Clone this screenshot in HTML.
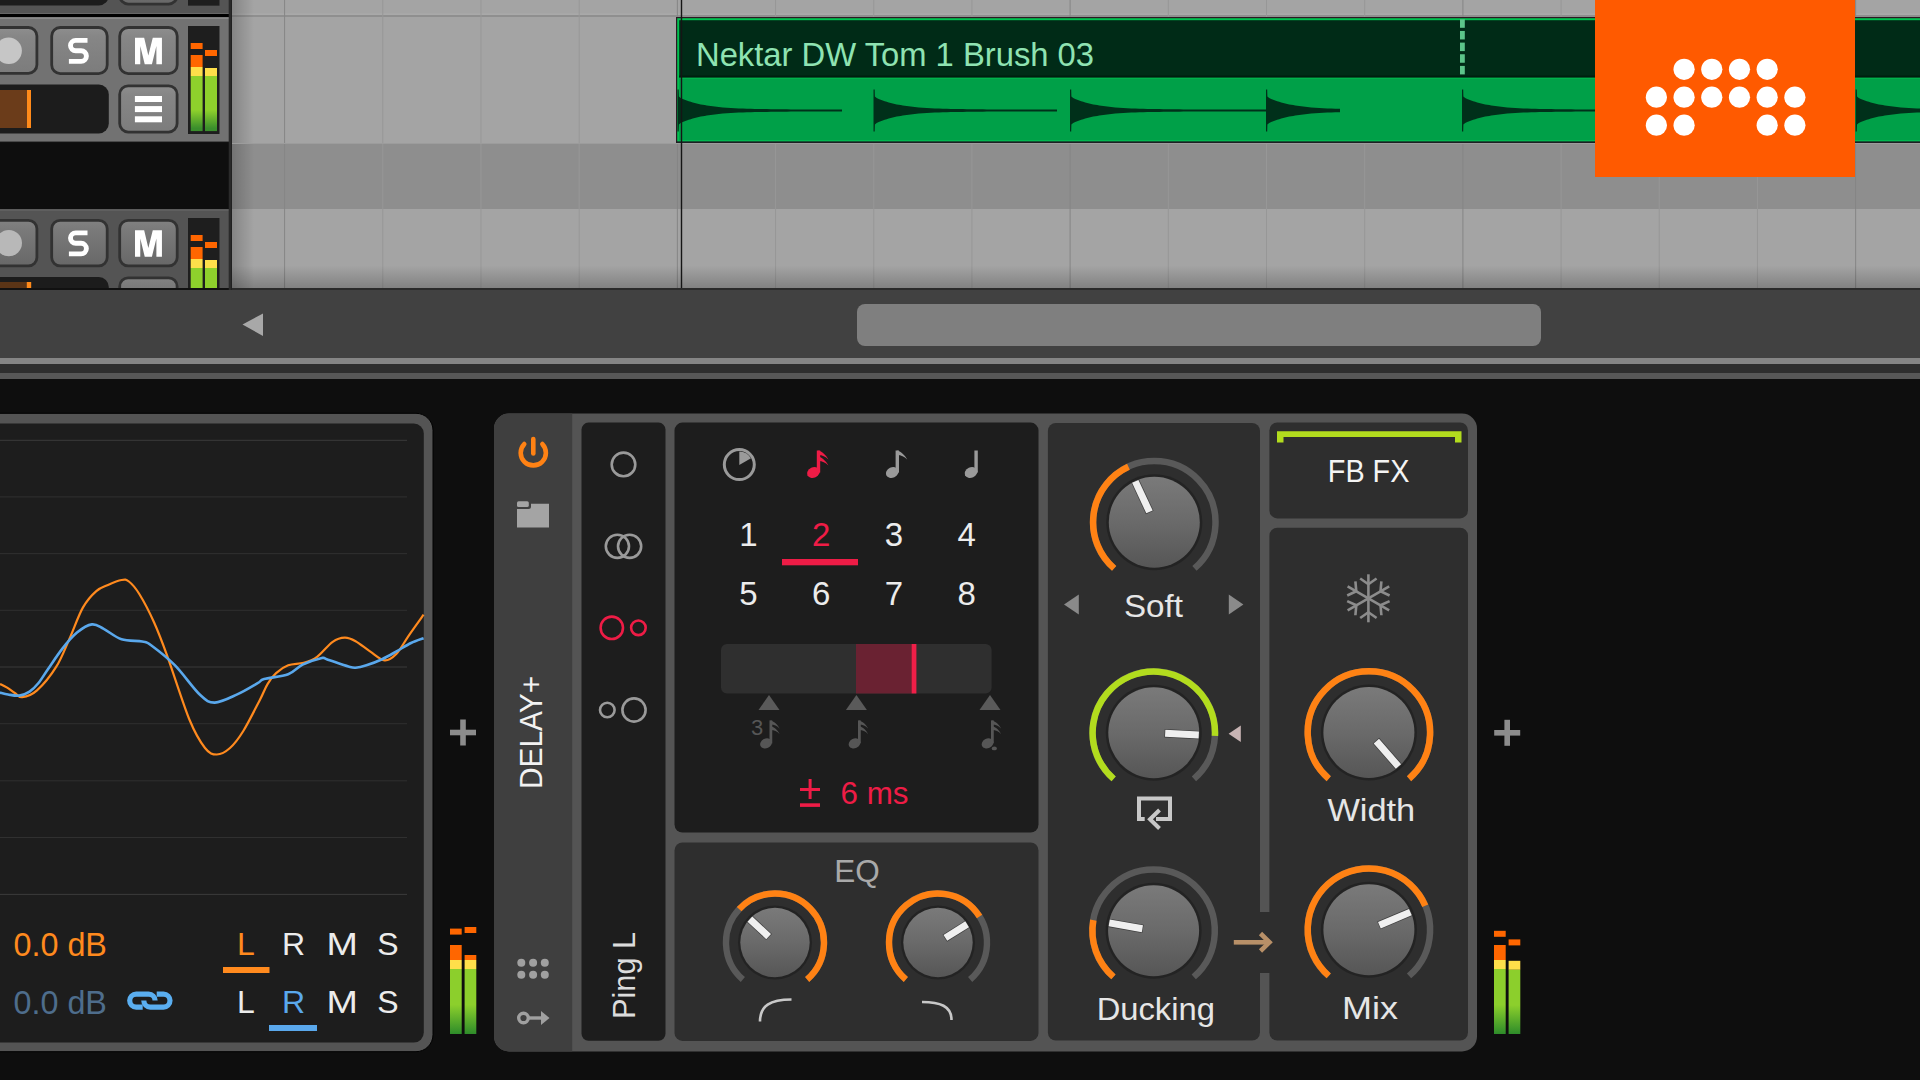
<!DOCTYPE html>
<html><head><meta charset="utf-8">
<style>
html,body{margin:0;padding:0}
body{width:1920px;height:1080px;overflow:hidden;position:relative;background:#0e0e0e;font-family:"Liberation Sans",sans-serif}
.a{position:absolute}
.btn{position:absolute;width:55px;height:43px;border:2px solid #3b3b3b;border-radius:11px;background:linear-gradient(#8d8d8d,#6f6f6f);box-sizing:content-box}
.btxt{position:absolute;left:0;right:0;text-align:center;color:#fff;font-weight:bold;font-size:35px;line-height:43px;top:0}
.trk{position:absolute;left:0;width:229px;background:#5c5c5c;overflow:hidden}
.sl{position:absolute;left:-12px;width:120px;height:49px;background:#1c1c1c;border-radius:11px}
.mtr{position:absolute;left:188px;width:32px;height:108px;background:#1c1c1c}
</style></head><body>

<svg class="a" style="left:0;top:0" width="232" height="290" viewBox="0 0 232 290">
<defs>
<linearGradient id="hmg" x1="0" x2="0" y1="0" y2="1"><stop offset="0" stop-color="#8ed02c"/><stop offset="0.62" stop-color="#8ed02c"/><stop offset="0.95" stop-color="#3a8e2c"/><stop offset="1" stop-color="#3a8e2c"/></linearGradient>
<linearGradient id="b1" x1="0" x2="0" y1="0" y2="1"><stop offset="0" stop-color="#8e8e8e"/><stop offset="0.2" stop-color="#868686"/><stop offset="1" stop-color="#7c7c7c"/></linearGradient>
<linearGradient id="b2" x1="0" x2="0" y1="0" y2="1"><stop offset="0" stop-color="#828282"/><stop offset="0.2" stop-color="#7a7a7a"/><stop offset="1" stop-color="#686868"/></linearGradient>
<clipPath id="c0"><rect x="0" y="0" width="229" height="14"/></clipPath>
<clipPath id="c2"><rect x="0" y="209" width="229" height="79"/></clipPath>
</defs>
<rect x="0" y="0" width="232" height="290" fill="#0e0e0e"/>
<g clip-path="url(#c0)"><rect x="0" y="0" width="229" height="14" fill="#545454"/><rect x="-20" y="-44" width="128.8" height="49.5" rx="10" fill="#1c1c1c"/><rect x="119.70" y="-42.60" width="57.40" height="46.70" rx="8.5" fill="url(#b2)" stroke="#323232" stroke-width="2.8"/><rect x="188" y="-50" width="31.5" height="55.65" fill="#1e1e1e"/><rect x="0" y="13" width="229" height="1" fill="#666"/></g>
<rect x="0" y="14" width="229" height="3" fill="#000"/>
<rect x="0" y="17" width="229" height="125" fill="#727272"/><rect x="0" y="17.5" width="229" height="1.5" fill="#888"/>
<rect x="-18.60" y="27.50" width="55.50" height="45.80" rx="8.5" fill="url(#b1)" stroke="#323232" stroke-width="2.8"/><circle cx="8.7" cy="50.8" r="13.2" fill="#c6c6c6"/><rect x="51.70" y="27.50" width="55.50" height="46.10" rx="8.5" fill="url(#b1)" stroke="#323232" stroke-width="2.8"/><path d="M87.5 40.4 H75.7 A5.2 5.2 0 0 0 75.7 50.8 H81.1 A5.3 5.3 0 0 1 81.1 61.4 H68.9" fill="none" stroke="#fff" stroke-width="4.9"/><rect x="119.70" y="27.50" width="57.50" height="46.10" rx="8.5" fill="url(#b1)" stroke="#323232" stroke-width="2.8"/><path d="M135.00 64.17 L135.00 37.78 L144.17 37.78 L148.33 55.56 L152.78 37.78 L161.94 37.78 L161.94 64.17 L156.39 64.17 L156.39 46.11 L151.94 64.17 L144.72 64.17 L140.28 46.11 L140.28 64.17 Z" fill="#fff"/>
<rect x="-20" y="84.6" width="128.8" height="48.9" rx="10" fill="#1c1c1c"/><rect x="0" y="90" width="27" height="38" fill="#6b3c1a"/><rect x="27" y="90" width="4" height="38" fill="#ff8a1a"/><rect x="119.70" y="85.80" width="57.40" height="46.30" rx="8.5" fill="url(#b1)" stroke="#323232" stroke-width="2.8"/><rect x="134.9" y="96" width="27.1" height="6" fill="#fff"/><rect x="134.9" y="106.1" width="27.1" height="6" fill="#fff"/><rect x="134.9" y="116.3" width="27.1" height="6" fill="#fff"/><rect x="188" y="26" width="31.5" height="108" fill="#1e1e1e"/><rect x="190.7" y="43" width="11.9" height="6" fill="#ff6600"/><rect x="190.7" y="55" width="11.9" height="12" fill="#ff6600"/><rect x="190.7" y="67" width="11.9" height="9" fill="#fedf4a"/><rect x="190.7" y="76" width="11.9" height="55.1" fill="url(#hmg)"/><rect x="205" y="50" width="12" height="6" fill="#ff6600"/><rect x="205" y="68" width="12" height="8" fill="#fedf4a"/><rect x="205" y="76" width="12" height="55.1" fill="url(#hmg)"/>
<rect x="0" y="141.6" width="229" height="1.4" fill="#111"/>
<g clip-path="url(#c2)"><rect x="0" y="209" width="229" height="79" fill="#545454"/><rect x="0" y="209.2" width="229" height="1.8" fill="#5f5f5f"/><rect x="-18.60" y="220.30" width="55.50" height="45.60" rx="8.5" fill="url(#b2)" stroke="#323232" stroke-width="2.8"/><circle cx="8.8" cy="243.1" r="13.2" fill="#b8b8b8"/><rect x="51.70" y="220.30" width="55.50" height="45.60" rx="8.5" fill="url(#b2)" stroke="#323232" stroke-width="2.8"/><path d="M87.5 232.9 H75.7 A5.2 5.2 0 0 0 75.7 243.3 H81.1 A5.3 5.3 0 0 1 81.1 253.9 H68.9" fill="none" stroke="#fff" stroke-width="4.9"/><rect x="119.70" y="220.30" width="57.50" height="45.60" rx="8.5" fill="url(#b2)" stroke="#323232" stroke-width="2.8"/><path d="M135.00 256.67 L135.00 230.28 L144.17 230.28 L148.33 248.06 L152.78 230.28 L161.94 230.28 L161.94 256.67 L156.39 256.67 L156.39 238.61 L151.94 256.67 L144.72 256.67 L140.28 238.61 L140.28 256.67 Z" fill="#fff"/><rect x="-20" y="277" width="128.8" height="48.9" rx="10" fill="#1c1c1c"/><rect x="0" y="282" width="27" height="10" fill="#5a3416"/><rect x="26.8" y="282" width="4.4" height="10" fill="#ff8a1a"/><rect x="119.70" y="277.80" width="57.40" height="45.80" rx="8.5" fill="url(#b2)" stroke="#323232" stroke-width="2.8"/><rect x="188" y="218" width="31.5" height="108" fill="#1e1e1e"/><rect x="190.7" y="235" width="11.9" height="6" fill="#ff6600"/><rect x="190.7" y="247" width="11.9" height="12" fill="#ff6600"/><rect x="190.7" y="259" width="11.9" height="9" fill="#fedf4a"/><rect x="190.7" y="268" width="11.9" height="55.1" fill="url(#hmg)"/><rect x="205" y="242" width="12" height="6" fill="#ff6600"/><rect x="205" y="260" width="12" height="8" fill="#fedf4a"/><rect x="205" y="268" width="12" height="55.1" fill="url(#hmg)"/></g>
<rect x="0" y="288" width="229" height="2.6" fill="#111"/>
<rect x="228.7" y="0" width="3" height="290" fill="#2a2a2a"/>
</svg>
<!-- ===== ARRANGER ===== -->
<svg class="a" style="left:0;top:0" width="1920" height="288" viewBox="0 0 1920 288">
<rect x="232" y="0" width="1688" height="288" fill="#a4a4a4"/>
<rect x="232" y="143" width="1688" height="66" fill="#8e8e8e"/>
<rect x="232" y="13.6" width="1688" height="1" fill="#acacac"/>
<rect x="232" y="15.2" width="1688" height="1.6" fill="#8b8b8b"/>
<rect x="284.10" y="0" width="1" height="288" fill="#858585"/>
<rect x="382.29" y="0" width="1" height="288" fill="#979797"/>
<rect x="480.48" y="0" width="1" height="288" fill="#979797"/>
<rect x="578.67" y="0" width="1" height="288" fill="#979797"/>
<rect x="676.86" y="0" width="1" height="288" fill="#858585"/>
<rect x="775.05" y="0" width="1" height="288" fill="#979797"/>
<rect x="873.24" y="0" width="1" height="288" fill="#979797"/>
<rect x="971.43" y="0" width="1" height="288" fill="#979797"/>
<rect x="1069.62" y="0" width="1" height="288" fill="#858585"/>
<rect x="1167.81" y="0" width="1" height="288" fill="#979797"/>
<rect x="1266.00" y="0" width="1" height="288" fill="#979797"/>
<rect x="1364.19" y="0" width="1" height="288" fill="#979797"/>
<rect x="1462.38" y="0" width="1" height="288" fill="#858585"/>
<rect x="1560.57" y="0" width="1" height="288" fill="#979797"/>
<rect x="1658.76" y="0" width="1" height="288" fill="#979797"/>
<rect x="1756.95" y="0" width="1" height="288" fill="#979797"/>
<rect x="1855.14" y="0" width="1" height="288" fill="#858585"/>
<defs><linearGradient id="shl" x1="0" x2="1" y1="0" y2="0"><stop offset="0" stop-color="#000" stop-opacity="0.19"/><stop offset="1" stop-color="#000" stop-opacity="0"/></linearGradient><linearGradient id="shb" x1="0" x2="0" y1="0" y2="1"><stop offset="0" stop-color="#000" stop-opacity="0"/><stop offset="1" stop-color="#000" stop-opacity="0.21"/></linearGradient></defs>
<rect x="232" y="0" width="22" height="288" fill="url(#shl)"/>
<rect x="232" y="265.5" width="1688" height="22.5" fill="url(#shb)"/>
<rect x="676" y="17" width="1244" height="126" fill="#2a1a22"/>
<rect x="677.2" y="18.2" width="1243" height="124" fill="#00c050"/>
<rect x="679.2" y="20.2" width="1241" height="58" fill="#002b17"/>
<rect x="679.2" y="78" width="1241" height="63.6" fill="#00a048"/>
<rect x="679.2" y="75.6" width="1241" height="2" fill="#001d0f"/><rect x="679.2" y="77.6" width="1241" height="1.4" fill="#00b24c"/>
<rect x="679.2" y="140" width="1241" height="1.4" fill="#00b850"/><rect x="676" y="141.4" width="1244" height="1.4" fill="#1c1a22"/><rect x="232" y="143" width="1688" height="1" fill="#9c9c9c"/>
<path d="M677.5 89.5 L678.7 89.5 L678.9 96.5 L680.7 98.1 L682.7 98.9 L684.7 99.8 L686.7 100.5 L688.7 101.2 L690.7 101.8 L692.7 102.4 L694.7 103.0 L696.7 103.5 L698.7 103.9 L700.7 104.4 L702.7 104.8 L704.7 105.1 L706.7 105.5 L708.7 105.8 L710.7 106.1 L712.7 106.3 L714.7 106.6 L716.7 106.8 L718.7 107.0 L722.7 107.4 L726.7 107.7 L730.7 108.0 L734.7 108.2 L738.7 108.4 L742.7 108.5 L746.7 108.7 L750.7 108.8 L754.7 108.9 L758.7 109.0 L762.7 109.1 L766.7 109.1 L770.7 109.2 L774.7 109.2 L778.7 109.3 L782.7 109.3 L786.7 109.3 L790.7 109.4 L794.7 109.4 L798.7 109.4 L802.7 109.4 L806.7 109.4 L810.7 109.4 L814.7 109.4 L818.7 109.5 L822.7 109.5 L826.7 109.5 L830.7 109.5 L834.7 109.5 L838.7 109.5 L842.0 109.5 L842.0 111.5 L838.7 111.5 L834.7 111.5 L830.7 111.5 L826.7 111.5 L822.7 111.5 L818.7 111.5 L814.7 111.6 L810.7 111.6 L806.7 111.6 L802.7 111.6 L798.7 111.6 L794.7 111.6 L790.7 111.6 L786.7 111.7 L782.7 111.7 L778.7 111.7 L774.7 111.8 L770.7 111.8 L766.7 111.9 L762.7 111.9 L758.7 112.0 L754.7 112.1 L750.7 112.2 L746.7 112.3 L742.7 112.5 L738.7 112.6 L734.7 112.8 L730.7 113.0 L726.7 113.3 L722.7 113.6 L718.7 114.0 L716.7 114.2 L714.7 114.4 L712.7 114.7 L710.7 114.9 L708.7 115.2 L706.7 115.5 L704.7 115.9 L702.7 116.2 L700.7 116.6 L698.7 117.1 L696.7 117.5 L694.7 118.0 L692.7 118.6 L690.7 119.2 L688.7 119.8 L686.7 120.5 L684.7 121.2 L682.7 122.1 L680.7 122.9 L678.9 124.5 L678.7 131.5 L677.5 131.5 Z M873.5 89.5 L874.7 89.5 L874.9 96.5 L876.7 98.1 L878.7 98.9 L880.7 99.8 L882.7 100.5 L884.7 101.2 L886.7 101.8 L888.7 102.4 L890.7 103.0 L892.7 103.5 L894.7 103.9 L896.7 104.4 L898.7 104.8 L900.7 105.1 L902.7 105.5 L904.7 105.8 L906.7 106.1 L908.7 106.3 L910.7 106.6 L912.7 106.8 L914.7 107.0 L918.7 107.4 L922.7 107.7 L926.7 108.0 L930.7 108.2 L934.7 108.4 L938.7 108.5 L942.7 108.7 L946.7 108.8 L950.7 108.9 L954.7 109.0 L958.7 109.1 L962.7 109.1 L966.7 109.2 L970.7 109.2 L974.7 109.3 L978.7 109.3 L982.7 109.3 L986.7 109.4 L990.7 109.4 L994.7 109.4 L998.7 109.4 L1002.7 109.4 L1006.7 109.4 L1010.7 109.4 L1014.7 109.5 L1018.7 109.5 L1022.7 109.5 L1026.7 109.5 L1030.7 109.5 L1034.7 109.5 L1038.7 109.5 L1042.7 109.5 L1046.7 109.5 L1050.7 109.5 L1054.7 109.5 L1057.0 109.5 L1057.0 111.5 L1054.7 111.5 L1050.7 111.5 L1046.7 111.5 L1042.7 111.5 L1038.7 111.5 L1034.7 111.5 L1030.7 111.5 L1026.7 111.5 L1022.7 111.5 L1018.7 111.5 L1014.7 111.5 L1010.7 111.6 L1006.7 111.6 L1002.7 111.6 L998.7 111.6 L994.7 111.6 L990.7 111.6 L986.7 111.6 L982.7 111.7 L978.7 111.7 L974.7 111.7 L970.7 111.8 L966.7 111.8 L962.7 111.9 L958.7 111.9 L954.7 112.0 L950.7 112.1 L946.7 112.2 L942.7 112.3 L938.7 112.5 L934.7 112.6 L930.7 112.8 L926.7 113.0 L922.7 113.3 L918.7 113.6 L914.7 114.0 L912.7 114.2 L910.7 114.4 L908.7 114.7 L906.7 114.9 L904.7 115.2 L902.7 115.5 L900.7 115.9 L898.7 116.2 L896.7 116.6 L894.7 117.1 L892.7 117.5 L890.7 118.0 L888.7 118.6 L886.7 119.2 L884.7 119.8 L882.7 120.5 L880.7 121.2 L878.7 122.1 L876.7 122.9 L874.9 124.5 L874.7 131.5 L873.5 131.5 Z M1070.0 89.5 L1071.2 89.5 L1071.4 96.5 L1073.2 98.1 L1075.2 98.9 L1077.2 99.8 L1079.2 100.5 L1081.2 101.2 L1083.2 101.8 L1085.2 102.4 L1087.2 103.0 L1089.2 103.5 L1091.2 103.9 L1093.2 104.4 L1095.2 104.8 L1097.2 105.1 L1099.2 105.5 L1101.2 105.8 L1103.2 106.1 L1105.2 106.3 L1107.2 106.6 L1109.2 106.8 L1111.2 107.0 L1115.2 107.4 L1119.2 107.7 L1123.2 108.0 L1127.2 108.2 L1131.2 108.4 L1135.2 108.5 L1139.2 108.7 L1143.2 108.8 L1147.2 108.9 L1151.2 109.0 L1155.2 109.1 L1159.2 109.1 L1163.2 109.2 L1167.2 109.2 L1171.2 109.3 L1175.2 109.3 L1179.2 109.3 L1183.2 109.4 L1187.2 109.4 L1191.2 109.4 L1195.2 109.4 L1199.2 109.4 L1203.2 109.4 L1207.2 109.4 L1211.2 109.5 L1215.2 109.5 L1219.2 109.5 L1223.2 109.5 L1227.2 109.5 L1231.2 109.5 L1235.2 109.5 L1239.2 109.5 L1243.2 109.5 L1247.2 109.5 L1251.2 109.5 L1255.2 109.5 L1259.2 109.5 L1263.2 109.5 L1266.0 109.5 L1266.0 111.5 L1263.2 111.5 L1259.2 111.5 L1255.2 111.5 L1251.2 111.5 L1247.2 111.5 L1243.2 111.5 L1239.2 111.5 L1235.2 111.5 L1231.2 111.5 L1227.2 111.5 L1223.2 111.5 L1219.2 111.5 L1215.2 111.5 L1211.2 111.5 L1207.2 111.6 L1203.2 111.6 L1199.2 111.6 L1195.2 111.6 L1191.2 111.6 L1187.2 111.6 L1183.2 111.6 L1179.2 111.7 L1175.2 111.7 L1171.2 111.7 L1167.2 111.8 L1163.2 111.8 L1159.2 111.9 L1155.2 111.9 L1151.2 112.0 L1147.2 112.1 L1143.2 112.2 L1139.2 112.3 L1135.2 112.5 L1131.2 112.6 L1127.2 112.8 L1123.2 113.0 L1119.2 113.3 L1115.2 113.6 L1111.2 114.0 L1109.2 114.2 L1107.2 114.4 L1105.2 114.7 L1103.2 114.9 L1101.2 115.2 L1099.2 115.5 L1097.2 115.9 L1095.2 116.2 L1093.2 116.6 L1091.2 117.1 L1089.2 117.5 L1087.2 118.0 L1085.2 118.6 L1083.2 119.2 L1081.2 119.8 L1079.2 120.5 L1077.2 121.2 L1075.2 122.1 L1073.2 122.9 L1071.4 124.5 L1071.2 131.5 L1070.0 131.5 Z M1266.0 89.5 L1267.2 89.5 L1267.4 96.5 L1269.2 98.1 L1271.2 98.9 L1273.2 99.8 L1275.2 100.5 L1277.2 101.2 L1279.2 101.8 L1281.2 102.4 L1283.2 103.0 L1285.2 103.5 L1287.2 103.9 L1289.2 104.4 L1291.2 104.8 L1293.2 105.1 L1295.2 105.5 L1297.2 105.8 L1299.2 106.1 L1301.2 106.3 L1303.2 106.6 L1305.2 106.8 L1307.2 107.0 L1311.2 107.4 L1315.2 107.7 L1319.2 108.0 L1323.2 108.2 L1327.2 108.4 L1331.2 108.5 L1335.2 108.7 L1339.2 108.8 L1340.0 108.8 L1340.0 112.2 L1339.2 112.2 L1335.2 112.3 L1331.2 112.5 L1327.2 112.6 L1323.2 112.8 L1319.2 113.0 L1315.2 113.3 L1311.2 113.6 L1307.2 114.0 L1305.2 114.2 L1303.2 114.4 L1301.2 114.7 L1299.2 114.9 L1297.2 115.2 L1295.2 115.5 L1293.2 115.9 L1291.2 116.2 L1289.2 116.6 L1287.2 117.1 L1285.2 117.5 L1283.2 118.0 L1281.2 118.6 L1279.2 119.2 L1277.2 119.8 L1275.2 120.5 L1273.2 121.2 L1271.2 122.1 L1269.2 122.9 L1267.4 124.5 L1267.2 131.5 L1266.0 131.5 Z M1462.0 89.5 L1463.2 89.5 L1463.4 96.5 L1465.2 98.1 L1467.2 98.9 L1469.2 99.8 L1471.2 100.5 L1473.2 101.2 L1475.2 101.8 L1477.2 102.4 L1479.2 103.0 L1481.2 103.5 L1483.2 103.9 L1485.2 104.4 L1487.2 104.8 L1489.2 105.1 L1491.2 105.5 L1493.2 105.8 L1495.2 106.1 L1497.2 106.3 L1499.2 106.6 L1501.2 106.8 L1503.2 107.0 L1507.2 107.4 L1511.2 107.7 L1515.2 108.0 L1519.2 108.2 L1523.2 108.4 L1527.2 108.5 L1531.2 108.7 L1535.2 108.8 L1539.2 108.9 L1543.2 109.0 L1547.2 109.1 L1551.2 109.1 L1555.2 109.2 L1559.2 109.2 L1563.2 109.3 L1567.2 109.3 L1571.2 109.3 L1575.2 109.4 L1579.2 109.4 L1583.2 109.4 L1587.2 109.4 L1591.2 109.4 L1595.2 109.4 L1599.2 109.4 L1603.2 109.5 L1607.2 109.5 L1611.2 109.5 L1615.2 109.5 L1619.2 109.5 L1623.2 109.5 L1627.2 109.5 L1631.2 109.5 L1635.2 109.5 L1639.2 109.5 L1643.2 109.5 L1647.2 109.5 L1651.2 109.5 L1655.2 109.5 L1659.2 109.5 L1660.0 109.5 L1660.0 111.5 L1659.2 111.5 L1655.2 111.5 L1651.2 111.5 L1647.2 111.5 L1643.2 111.5 L1639.2 111.5 L1635.2 111.5 L1631.2 111.5 L1627.2 111.5 L1623.2 111.5 L1619.2 111.5 L1615.2 111.5 L1611.2 111.5 L1607.2 111.5 L1603.2 111.5 L1599.2 111.6 L1595.2 111.6 L1591.2 111.6 L1587.2 111.6 L1583.2 111.6 L1579.2 111.6 L1575.2 111.6 L1571.2 111.7 L1567.2 111.7 L1563.2 111.7 L1559.2 111.8 L1555.2 111.8 L1551.2 111.9 L1547.2 111.9 L1543.2 112.0 L1539.2 112.1 L1535.2 112.2 L1531.2 112.3 L1527.2 112.5 L1523.2 112.6 L1519.2 112.8 L1515.2 113.0 L1511.2 113.3 L1507.2 113.6 L1503.2 114.0 L1501.2 114.2 L1499.2 114.4 L1497.2 114.7 L1495.2 114.9 L1493.2 115.2 L1491.2 115.5 L1489.2 115.9 L1487.2 116.2 L1485.2 116.6 L1483.2 117.1 L1481.2 117.5 L1479.2 118.0 L1477.2 118.6 L1475.2 119.2 L1473.2 119.8 L1471.2 120.5 L1469.2 121.2 L1467.2 122.1 L1465.2 122.9 L1463.4 124.5 L1463.2 131.5 L1462.0 131.5 Z M1658.0 89.5 L1659.2 89.5 L1659.4 96.5 L1661.2 98.1 L1663.2 98.9 L1665.2 99.8 L1667.2 100.5 L1669.2 101.2 L1671.2 101.8 L1673.2 102.4 L1675.2 103.0 L1677.2 103.5 L1679.2 103.9 L1681.2 104.4 L1683.2 104.8 L1685.2 105.1 L1687.2 105.5 L1689.2 105.8 L1691.2 106.1 L1693.2 106.3 L1695.2 106.6 L1697.2 106.8 L1699.2 107.0 L1703.2 107.4 L1707.2 107.7 L1711.2 108.0 L1715.2 108.2 L1719.2 108.4 L1723.2 108.5 L1727.2 108.7 L1731.2 108.8 L1735.2 108.9 L1739.2 109.0 L1743.2 109.1 L1747.2 109.1 L1751.2 109.2 L1755.2 109.2 L1759.2 109.3 L1763.2 109.3 L1767.2 109.3 L1771.2 109.4 L1775.2 109.4 L1779.2 109.4 L1783.2 109.4 L1787.2 109.4 L1791.2 109.4 L1795.2 109.4 L1799.2 109.5 L1803.2 109.5 L1807.2 109.5 L1811.2 109.5 L1815.2 109.5 L1819.2 109.5 L1823.2 109.5 L1827.2 109.5 L1831.2 109.5 L1835.2 109.5 L1839.2 109.5 L1843.2 109.5 L1847.2 109.5 L1851.2 109.5 L1855.0 109.5 L1855.0 111.5 L1851.2 111.5 L1847.2 111.5 L1843.2 111.5 L1839.2 111.5 L1835.2 111.5 L1831.2 111.5 L1827.2 111.5 L1823.2 111.5 L1819.2 111.5 L1815.2 111.5 L1811.2 111.5 L1807.2 111.5 L1803.2 111.5 L1799.2 111.5 L1795.2 111.6 L1791.2 111.6 L1787.2 111.6 L1783.2 111.6 L1779.2 111.6 L1775.2 111.6 L1771.2 111.6 L1767.2 111.7 L1763.2 111.7 L1759.2 111.7 L1755.2 111.8 L1751.2 111.8 L1747.2 111.9 L1743.2 111.9 L1739.2 112.0 L1735.2 112.1 L1731.2 112.2 L1727.2 112.3 L1723.2 112.5 L1719.2 112.6 L1715.2 112.8 L1711.2 113.0 L1707.2 113.3 L1703.2 113.6 L1699.2 114.0 L1697.2 114.2 L1695.2 114.4 L1693.2 114.7 L1691.2 114.9 L1689.2 115.2 L1687.2 115.5 L1685.2 115.9 L1683.2 116.2 L1681.2 116.6 L1679.2 117.1 L1677.2 117.5 L1675.2 118.0 L1673.2 118.6 L1671.2 119.2 L1669.2 119.8 L1667.2 120.5 L1665.2 121.2 L1663.2 122.1 L1661.2 122.9 L1659.4 124.5 L1659.2 131.5 L1658.0 131.5 Z M1855.6 89.5 L1856.8 89.5 L1857.0 96.5 L1858.8 98.1 L1860.8 98.9 L1862.8 99.8 L1864.8 100.5 L1866.8 101.2 L1868.8 101.8 L1870.8 102.4 L1872.8 103.0 L1874.8 103.5 L1876.8 103.9 L1878.8 104.4 L1880.8 104.8 L1882.8 105.1 L1884.8 105.5 L1886.8 105.8 L1888.8 106.1 L1890.8 106.3 L1892.8 106.6 L1894.8 106.8 L1896.8 107.0 L1900.8 107.4 L1904.8 107.7 L1908.8 108.0 L1912.8 108.2 L1916.8 108.4 L1920.0 108.5 L1920.0 112.5 L1916.8 112.6 L1912.8 112.8 L1908.8 113.0 L1904.8 113.3 L1900.8 113.6 L1896.8 114.0 L1894.8 114.2 L1892.8 114.4 L1890.8 114.7 L1888.8 114.9 L1886.8 115.2 L1884.8 115.5 L1882.8 115.9 L1880.8 116.2 L1878.8 116.6 L1876.8 117.1 L1874.8 117.5 L1872.8 118.0 L1870.8 118.6 L1868.8 119.2 L1866.8 119.8 L1864.8 120.5 L1862.8 121.2 L1860.8 122.1 L1858.8 122.9 L1857.0 124.5 L1856.8 131.5 L1855.6 131.5 Z " fill="#00301a"/>
<rect x="680.8" y="0" width="1.4" height="288" fill="#151515"/>
<rect x="1460" y="19.30" width="4.8" height="8.5" fill="#5cc58a"/>
<rect x="1460" y="30.95" width="4.8" height="8.5" fill="#5cc58a"/>
<rect x="1460" y="42.60" width="4.8" height="8.5" fill="#5cc58a"/>
<rect x="1460" y="54.25" width="4.8" height="8.5" fill="#5cc58a"/>
<rect x="1460" y="65.90" width="4.8" height="8.5" fill="#5cc58a"/>
</svg>
<svg class="a" style="left:0;top:0" width="1200" height="100" font-family="Liberation Sans, sans-serif"><text x="696" y="65.6" font-size="32.5" fill="#8fe3b2" textLength="398" lengthAdjust="spacingAndGlyphs">Nektar DW Tom 1 Brush 03</text></svg>
<div class="a" style="left:1594.8px;top:0;width:260.2px;height:177px;background:#ff5a00"></div>
<svg class="a" style="left:1596px;top:0" width="259" height="176"><circle cx="88.1" cy="69.3" r="10.6" fill="#fff"/><circle cx="115.8" cy="69.3" r="10.6" fill="#fff"/><circle cx="143.5" cy="69.3" r="10.6" fill="#fff"/><circle cx="171.2" cy="69.3" r="10.6" fill="#fff"/><circle cx="60.4" cy="97.2" r="10.6" fill="#fff"/><circle cx="88.1" cy="97.2" r="10.6" fill="#fff"/><circle cx="115.8" cy="97.2" r="10.6" fill="#fff"/><circle cx="143.5" cy="97.2" r="10.6" fill="#fff"/><circle cx="171.2" cy="97.2" r="10.6" fill="#fff"/><circle cx="198.9" cy="97.2" r="10.6" fill="#fff"/><circle cx="60.4" cy="125.2" r="10.6" fill="#fff"/><circle cx="88.1" cy="125.2" r="10.6" fill="#fff"/><circle cx="171.2" cy="125.2" r="10.6" fill="#fff"/><circle cx="198.9" cy="125.2" r="10.6" fill="#fff"/></svg>

<div class="a" style="left:232px;top:288px;width:1688px;height:2px;background:#2a2a2a"></div>

<!-- ===== SCROLL ===== -->
<div class="a" style="left:0;top:290px;width:1920px;height:68px;background:#414141"></div>
<svg class="a" style="left:0;top:290px" width="300" height="68"><path d="M242.5 34.5 L263 23.5 L263 46 Z" fill="#a8a8a8"/></svg>
<div class="a" style="left:857px;top:304px;width:684px;height:42px;background:#7f7f7f;border-radius:8px"></div>
<div class="a" style="left:0;top:358px;width:1920px;height:6px;background:#858585"></div>
<div class="a" style="left:0;top:364px;width:1920px;height:9px;background:#2e2e2e"></div>
<div class="a" style="left:0;top:373px;width:1920px;height:6px;background:#575757"></div>

<!-- ===== DEVICES ===== -->
<svg class="a" style="left:0;top:0" width="1920" height="1080" viewBox="0 0 1920 1080" font-family="Liberation Sans, sans-serif">
<defs>
<linearGradient id="kg" x1="0" x2="0" y1="0" y2="1"><stop offset="0" stop-color="#7a7a7a"/><stop offset="0.5" stop-color="#6a6a6a"/><stop offset="1" stop-color="#565656"/></linearGradient>
<linearGradient id="mg" x1="0" x2="0" y1="0" y2="1"><stop offset="0" stop-color="#8ccf2c"/><stop offset="0.55" stop-color="#8ccf2c"/><stop offset="1" stop-color="#2e8c2a"/></linearGradient>
</defs>
<rect x="-30" y="413.3" width="463.00" height="638.40" rx="17" fill="#545454" stroke="#000" stroke-width="1"/>
<rect x="-30" y="423.6" width="453.80" height="619.00" rx="10" fill="#1d1d1d" />
<rect x="0" y="439.8" width="407" height="1" fill="#3b3b3b"/><rect x="0" y="496.4" width="407" height="1" fill="#303030"/><rect x="0" y="553.1" width="407" height="1" fill="#303030"/><rect x="0" y="609.8" width="407" height="1" fill="#303030"/><rect x="0" y="666.5" width="407" height="1" fill="#3b3b3b"/><rect x="0" y="723.2" width="407" height="1" fill="#303030"/><rect x="0" y="780.3" width="407" height="1" fill="#303030"/><rect x="0" y="837.0" width="407" height="1" fill="#303030"/><rect x="0" y="893.9" width="407" height="1" fill="#3b3b3b"/>
<path d="M0 684 C1.1 684.6 4.2 685.9 6.7 687.4 C9.2 688.9 12.2 691.4 14.8 693 C17.4 694.6 18.5 697.6 22.2 697.2 C25.9 696.8 31.3 695.5 37 690.4 C42.7 685.3 50.9 675.4 56.3 666.7 C61.7 658.1 65.1 648.4 69.6 638.5 C74.0 628.6 78.5 615.3 83 607.4 C87.5 599.5 92.1 594.8 96.3 591.1 C100.5 587.4 103.8 586.9 108 585 C112.2 583.1 118.0 580.6 121.5 580 C125.0 579.4 125.9 579.2 128.9 581.5 C131.9 583.8 135.1 587.2 139.3 594 C143.5 600.8 149.3 611.8 154 622.2 C158.7 632.6 161.5 640.0 167.4 656.3 C173.3 672.6 183.3 704.7 189.6 720 C195.9 735.3 200.5 742.2 205 748 C209.5 753.8 212.6 754.5 216.8 754.5 C221.0 754.5 225.6 751.9 230 748 C234.4 744.1 238.4 738.9 243.3 731 C248.2 723.1 255.5 708.4 259.6 700.5 C263.7 692.6 264.9 688.5 267.7 683.9 C270.4 679.3 272.7 676.2 276.1 673.1 C279.5 670.0 283.6 667.0 288.2 665.3 C292.8 663.6 299.0 664.2 303.8 662.8 C308.6 661.4 312.3 660.3 317.1 656.8 C321.9 653.3 328.1 645.0 332.7 641.8 C337.3 638.6 341.0 637.7 344.8 637.6 C348.6 637.5 351.4 638.9 355.6 641.2 C359.8 643.5 365.2 648.2 370 651.4 C374.8 654.6 380.1 660.0 384.5 660.4 C388.9 660.8 392.5 657.9 396.5 653.8 C400.5 649.7 404.1 642.3 408.6 635.8 C413.1 629.3 421.1 618.2 423.6 614.7 " fill="none" stroke="#ff8a1e" stroke-width="2.2"/>
<path d="M0 692.6 C1.3 692.9 4.9 694.0 8.1 694.5 C11.3 695.0 15.7 696.1 19.3 695.6 C22.9 695.1 26.4 693.7 29.6 691.6 C32.8 689.5 35.4 686.8 38.5 683 C41.6 679.2 44.1 674.7 48.1 669 C52.1 663.3 57.4 655.0 62.2 648.9 C67.0 642.8 72.0 636.7 77 632.6 C82.0 628.5 87.5 625.0 91.9 624.4 C96.4 623.8 98.8 626.4 103.7 628.9 C108.6 631.4 115.1 637.2 121.5 639.3 C127.9 641.4 137.3 640.5 142.2 641.5 C147.1 642.5 145.7 641.2 151.1 645.2 C156.5 649.2 166.7 656.9 174.8 665.2 C183.0 673.5 193.3 688.6 200 694.8 C206.7 701.0 208.6 702.7 214.8 702.6 C221.0 702.5 230.1 697.6 237.2 694.4 C244.3 691.2 253.1 685.8 257.6 683.2 C262.1 680.7 259.0 680.6 264.1 679.1 C269.2 677.6 281.8 676.7 288.2 674.3 C294.6 671.9 297.0 667.4 302.6 664.7 C308.2 662.0 317.9 658.9 321.9 658 C325.9 657.1 322.3 657.8 326.7 659.2 C331.1 660.6 343.6 665.1 348.4 666.5 C353.2 667.9 352.6 667.9 355.6 667.7 C358.6 667.5 362.0 666.7 366.4 665.3 C370.8 663.9 377.1 661.5 382.1 659.2 C387.1 656.9 391.7 654.1 396.5 651.4 C401.3 648.7 406.5 645.2 411 643 C415.5 640.8 421.5 639.0 423.6 638.2 " fill="none" stroke="#5aa8ec" stroke-width="2.6"/>
<text x="13.5" y="956.2" font-size="32.5" fill="#ff8a1e" text-anchor="start"  textLength="93.4" lengthAdjust="spacingAndGlyphs">0.0 dB</text>
<text x="13.5" y="1014.2" font-size="32.5" fill="#4e6d8c" text-anchor="start"  textLength="93.4" lengthAdjust="spacingAndGlyphs">0.0 dB</text>
<text x="246" y="954.5" font-size="32" fill="#ff8a1e" text-anchor="middle" >L</text>
<text x="246" y="1012.5" font-size="32" fill="#ececec" text-anchor="middle" >L</text>
<text x="293.5" y="954.5" font-size="32" fill="#ececec" text-anchor="middle" >R</text>
<text x="293.5" y="1012.5" font-size="32" fill="#5aa8ec" text-anchor="middle" >R</text>
<text x="342.3" y="954.5" font-size="32" fill="#ececec" text-anchor="middle"  textLength="31.4" lengthAdjust="spacingAndGlyphs">M</text>
<text x="342.3" y="1012.5" font-size="32" fill="#ececec" text-anchor="middle"  textLength="31.4" lengthAdjust="spacingAndGlyphs">M</text>
<text x="388" y="954.5" font-size="32" fill="#ececec" text-anchor="middle" >S</text>
<text x="388" y="1012.5" font-size="32" fill="#ececec" text-anchor="middle" >S</text>
<rect x="223" y="967" width="46.5" height="6" fill="#ff8a1e"/><rect x="269" y="1025" width="48" height="6" fill="#5aa8ec"/>
<path d="M142.7 1007.1 H136.2 A6.5 6.5 0 0 1 136.2 994.1 H148.6 A6.5 6.5 0 0 1 155.1 1000.6" fill="none" stroke="#5aaef0" stroke-width="5.2"/><path d="M156.7 994.1 H163.5 A6.5 6.5 0 0 1 163.5 1007.1 H150.3 A6.5 6.5 0 0 1 143.8 1000.6" fill="none" stroke="#5aaef0" stroke-width="5.2"/>
<rect x="450" y="729.7" width="26" height="5.6" fill="#8c8c8c"/><rect x="460.2" y="719.5" width="5.6" height="26" fill="#8c8c8c"/>
<rect x="450" y="928.6" width="11.7" height="6" fill="#ff6600"/><rect x="450" y="945" width="11.7" height="15" fill="#ff6600"/><rect x="450" y="960" width="11.7" height="9" fill="#fedf4a"/><rect x="450" y="969" width="11.7" height="65" fill="url(#mg)"/><rect x="464.6" y="927" width="11.7" height="6" fill="#ff6600"/><rect x="464.6" y="955" width="11.7" height="5" fill="#ff6600"/><rect x="464.6" y="960" width="11.7" height="9" fill="#fedf4a"/><rect x="464.6" y="969" width="11.7" height="65" fill="url(#mg)"/>
<rect x="494" y="413.5" width="983.00" height="638.00" rx="15" fill="#545454" />
<path d="M572.2 413.5 H509 A15 15 0 0 0 494 428.5 V1036.5 A15 15 0 0 0 509 1051.5 H572.2 Z" fill="#3f3f3f"/>
<rect x="581.5" y="422.6" width="84.00" height="618.10" rx="7" fill="#1d1d1d" />
<rect x="674.5" y="422.6" width="364.00" height="410.00" rx="8" fill="#1d1d1d" />
<rect x="674.5" y="842.4" width="364.00" height="198.50" rx="8" fill="#2e2e2e" />
<rect x="1047.9" y="422.9" width="212.10" height="617.70" rx="8" fill="#2e2e2e" />
<rect x="1269.4" y="422.4" width="198.60" height="96.00" rx="8" fill="#2e2e2e" />
<rect x="1269.4" y="527.7" width="198.60" height="512.80" rx="8" fill="#2e2e2e" />
<rect x="1255" y="912" width="20" height="61" fill="#2e2e2e"/>
<path d="M524.24 444.05 A12.6 12.6 0 1 0 542.36 444.05" fill="none" stroke="#ff8214" stroke-width="4.6" stroke-linecap="round"/><line x1="533.3" y1="439" x2="533.3" y2="453.5" stroke="#ff8214" stroke-width="4.6" stroke-linecap="round"/>
<rect x="517" y="501.2" width="11.8" height="5.8" rx="1.6" fill="#a4a4a4"/><path d="M517 509 H528.5 Q531 509 531 506.5 V503.8 H549 V527.4 H517 Z" fill="#a4a4a4"/>
<text x="541.5" y="732.5" font-size="31" fill="#f2f2f2" text-anchor="middle" transform="rotate(-90 541.5 732.5)" textLength="113.2" lengthAdjust="spacingAndGlyphs">DELAY+</text>
<circle cx="521.3" cy="962.8" r="4" fill="#a0a0a0"/><circle cx="521.3" cy="974.8" r="4" fill="#a0a0a0"/><circle cx="533.1" cy="962.8" r="4" fill="#a0a0a0"/><circle cx="533.1" cy="974.8" r="4" fill="#a0a0a0"/><circle cx="544.8" cy="962.8" r="4" fill="#a0a0a0"/><circle cx="544.8" cy="974.8" r="4" fill="#a0a0a0"/><circle cx="523.5" cy="1018" r="4.8" fill="none" stroke="#a0a0a0" stroke-width="3.4"/><line x1="528" y1="1018" x2="543" y2="1018" stroke="#a0a0a0" stroke-width="3.4"/><path d="M541 1011 L549.5 1018 L541 1025 Z" fill="#a0a0a0"/>
<circle cx="623.5" cy="464.4" r="11.8" fill="none" stroke="#9a9a9a" stroke-width="2.6"/>
<circle cx="617.4" cy="546.3" r="11.6" fill="none" stroke="#9a9a9a" stroke-width="2.6"/><circle cx="629.6" cy="546.3" r="11.6" fill="none" stroke="#9a9a9a" stroke-width="2.6"/>
<circle cx="611.8" cy="627.8" r="11.2" fill="none" stroke="#ee1c46" stroke-width="2.6"/><circle cx="638.4" cy="627.8" r="7.3" fill="none" stroke="#ee1c46" stroke-width="2.6"/>
<circle cx="607.3" cy="710" r="7.3" fill="none" stroke="#9a9a9a" stroke-width="2.6"/><circle cx="634" cy="710" r="11.6" fill="none" stroke="#9a9a9a" stroke-width="2.6"/>
<text x="634.7" y="975.4" font-size="31" fill="#dcdcdc" text-anchor="middle" transform="rotate(-90 634.7 975.4)" textLength="87.2" lengthAdjust="spacingAndGlyphs">Ping L</text>
<circle cx="739.3" cy="464.6" r="15" fill="none" stroke="#9a9a9a" stroke-width="3"/><path d="M739.3 465 L739.3 451.5 A13.5 13.5 0 0 1 751 458.2 Z" fill="#9a9a9a"/>
<g transform="translate(813.4 472.5) scale(1.0)"><ellipse cx="0" cy="0" rx="6.6" ry="5.2" transform="rotate(-25)" fill="#ee1c46"/><rect x="3.4" y="-22" width="3.4" height="22" fill="#ee1c46"/><path d="M5 -22 C9 -21 13 -17 15 -13 C12 -16 9 -17.5 5 -17.5 Z" fill="#ee1c46"/><path d="M5 -16 C9 -15 13 -11 15 -7 C12 -10 9 -11.5 5 -11.5 Z" fill="#ee1c46"/></g><g transform="translate(892.2 472.5) scale(1.0)"><ellipse cx="0" cy="0" rx="6.6" ry="5.2" transform="rotate(-25)" fill="#9a9a9a"/><rect x="3.4" y="-22" width="3.4" height="22" fill="#9a9a9a"/><path d="M5 -22 C9 -21 13 -17 15 -13 C12 -16 9 -17.5 5 -17.5 Z" fill="#9a9a9a"/></g><g transform="translate(971 472.5) scale(1.0)"><ellipse cx="0" cy="0" rx="6.6" ry="5.2" transform="rotate(-25)" fill="#9a9a9a"/><rect x="3.4" y="-22" width="3.4" height="22" fill="#9a9a9a"/></g>
<text x="748.5" y="546" font-size="33" fill="#ececec" text-anchor="middle" >1</text>
<text x="821.2" y="546" font-size="33" fill="#ee1c46" text-anchor="middle" >2</text>
<text x="893.9" y="546" font-size="33" fill="#ececec" text-anchor="middle" >3</text>
<text x="966.6" y="546" font-size="33" fill="#ececec" text-anchor="middle" >4</text>
<text x="748.5" y="604.6" font-size="33" fill="#ececec" text-anchor="middle" >5</text>
<text x="821.2" y="604.6" font-size="33" fill="#ececec" text-anchor="middle" >6</text>
<text x="893.9" y="604.6" font-size="33" fill="#ececec" text-anchor="middle" >7</text>
<text x="966.6" y="604.6" font-size="33" fill="#ececec" text-anchor="middle" >8</text>
<rect x="782" y="559" width="76" height="6.3" fill="#ee1c46"/>
<rect x="721" y="644" width="270.60" height="49.50" rx="6" fill="#2f2f2f" />
<rect x="856" y="644" width="56" height="49.5" fill="#6a2232"/><rect x="911.7" y="644" width="4.7" height="49.5" fill="#f01f48"/>
<path d="M758.5 710 L769 695 L779.5 710 Z" fill="#5a5a5a"/><path d="M845.9 710 L856.4 695 L866.9 710 Z" fill="#5a5a5a"/><path d="M979.5 710 L990 695 L1000.5 710 Z" fill="#5a5a5a"/>
<g transform="translate(766 743.4) scale(0.92)"><ellipse cx="0" cy="0" rx="6.6" ry="5.2" transform="rotate(-25)" fill="#565656"/><rect x="3.8" y="-25" width="3" height="25" fill="#565656"/><path d="M5 -25 C9 -24 13 -20 15 -16 C12 -19 9 -20.5 5 -20.5 Z" fill="#565656"/><path d="M5 -19 C9 -18 13 -14 15 -10 C12 -13 9 -14.5 5 -14.5 Z" fill="#565656"/></g><text x="757" y="735" font-size="22" fill="#565656" text-anchor="middle" >3</text>
<g transform="translate(854.5 743.4) scale(0.92)"><ellipse cx="0" cy="0" rx="6.6" ry="5.2" transform="rotate(-25)" fill="#565656"/><rect x="3.8" y="-25" width="3" height="25" fill="#565656"/><path d="M5 -25 C9 -24 13 -20 15 -16 C12 -19 9 -20.5 5 -20.5 Z" fill="#565656"/><path d="M5 -19 C9 -18 13 -14 15 -10 C12 -13 9 -14.5 5 -14.5 Z" fill="#565656"/></g><g transform="translate(987.5 743.4) scale(0.92)"><ellipse cx="0" cy="0" rx="6.6" ry="5.2" transform="rotate(-25)" fill="#565656"/><rect x="3.8" y="-25" width="3" height="25" fill="#565656"/><path d="M5 -25 C9 -24 13 -20 15 -16 C12 -19 9 -20.5 5 -20.5 Z" fill="#565656"/><path d="M5 -19 C9 -18 13 -14 15 -10 C12 -13 9 -14.5 5 -14.5 Z" fill="#565656"/></g><ellipse cx="994.3" cy="748.4" rx="2.6" ry="1.9" fill="#565656"/>
<rect x="800" y="803.3" width="20" height="3.6" fill="#ee1c46"/><rect x="800" y="788" width="20" height="3" fill="#ee1c46"/><rect x="808.6" y="779" width="3" height="20" fill="#ee1c46"/>
<text x="840.5" y="804.2" font-size="31" fill="#ee1c46" text-anchor="start"  textLength="68" lengthAdjust="spacingAndGlyphs">6 ms</text>
<text x="857" y="882" font-size="31" fill="#a9a9a9" text-anchor="middle"  textLength="45.5" lengthAdjust="spacingAndGlyphs">EQ</text>
<path d="M742.85 979.48 A49.0 49.0 0 1 1 807.15 979.48" fill="none" stroke="#595959" stroke-width="6.4"/><path d="M739.16 909.08 A49.0 49.0 0 1 1 807.15 979.48" fill="none" stroke="#ff8214" stroke-width="6.4"/><circle cx="775" cy="942.5" r="37" fill="#232323"/><circle cx="775" cy="942.5" r="34.7" fill="url(#kg)"/><line x1="769.09" y1="936.99" x2="749.44" y2="918.66" stroke="#2a2a2a" stroke-width="8.4" opacity="0.7"/><line x1="768.66" y1="936.58" x2="749.88" y2="919.07" stroke="#efefef" stroke-width="7"/>
<path d="M905.85 979.48 A49.0 49.0 0 1 1 970.15 979.48" fill="none" stroke="#595959" stroke-width="6.4"/><path d="M905.85 979.48 A49.0 49.0 0 1 1 979.55 916.53" fill="none" stroke="#ff8214" stroke-width="6.4"/><circle cx="938" cy="942.5" r="37" fill="#232323"/><circle cx="938" cy="942.5" r="34.7" fill="url(#kg)"/><line x1="944.85" y1="938.22" x2="967.64" y2="923.98" stroke="#2a2a2a" stroke-width="8.4" opacity="0.7"/><line x1="945.36" y1="937.90" x2="967.13" y2="924.30" stroke="#efefef" stroke-width="7"/>
<path d="M760 1021.5 C760 1006 770 999.5 791.5 999.5" fill="none" stroke="#c8c8c8" stroke-width="2.6"/><path d="M922 1002 C940 1002 951.5 1006 951.5 1020" fill="none" stroke="#c8c8c8" stroke-width="2.6"/>
<path d="M1114.15 568.39 A61.2 61.2 0 1 1 1194.45 568.39" fill="none" stroke="#595959" stroke-width="6.5"/><path d="M1114.15 568.39 A61.2 61.2 0 0 1 1128.44 466.73" fill="none" stroke="#ff8214" stroke-width="6.5"/><circle cx="1154.3" cy="522.2" r="48" fill="#232323"/><circle cx="1154.3" cy="522.2" r="45.5" fill="url(#kg)"/><line x1="1149.75" y1="512.43" x2="1135.01" y2="480.83" stroke="#2a2a2a" stroke-width="8.4" opacity="0.7"/><line x1="1149.49" y1="511.89" x2="1135.26" y2="481.38" stroke="#efefef" stroke-width="7"/>
<text x="1153.4" y="617" font-size="31" fill="#e6e6e6" text-anchor="middle"  textLength="59" lengthAdjust="spacingAndGlyphs">Soft</text>
<path d="M1064 604.4 L1078.8 594.4 L1078.8 614.4 Z" fill="#8a8a8a"/><path d="M1243.4 604.4 L1228.8 594.4 L1228.8 614.4 Z" fill="#8a8a8a"/>
<path d="M1113.65 778.89 A61.2 61.2 0 1 1 1193.95 778.89" fill="none" stroke="#595959" stroke-width="6.5"/><path d="M1113.65 778.89 A61.2 61.2 0 1 1 1214.92 735.90" fill="none" stroke="#b2dc1e" stroke-width="6.5"/><circle cx="1153.8" cy="732.7" r="48" fill="#232323"/><circle cx="1153.8" cy="732.7" r="45.5" fill="url(#kg)"/><line x1="1164.56" y1="733.26" x2="1199.38" y2="735.09" stroke="#2a2a2a" stroke-width="8.4" opacity="0.7"/><line x1="1165.16" y1="733.30" x2="1198.78" y2="735.06" stroke="#efefef" stroke-width="7"/>
<path d="M1228.6 733.7 L1240.8 725.6 L1240.8 741.9 Z" fill="#c8b4b4"/>
<path d="M1144.7 819 H1139 V798.5 H1170 V819 H1156" fill="none" stroke="#c8c8c8" stroke-width="4"/><path d="M1159.5 810 L1150 819.2 L1159.5 828.5" fill="none" stroke="#c8c8c8" stroke-width="4"/>
<path d="M1113.45 976.89 A61.2 61.2 0 1 1 1193.75 976.89" fill="none" stroke="#595959" stroke-width="6.5"/><path d="M1113.45 976.89 A61.2 61.2 0 0 1 1093.33 920.07" fill="none" stroke="#ff8214" stroke-width="6.5"/><circle cx="1153.6" cy="930.7" r="48" fill="#232323"/><circle cx="1153.6" cy="930.7" r="45.5" fill="url(#kg)"/><line x1="1142.99" y1="928.83" x2="1108.65" y2="922.77" stroke="#2a2a2a" stroke-width="8.4" opacity="0.7"/><line x1="1142.40" y1="928.72" x2="1109.24" y2="922.88" stroke="#efefef" stroke-width="7"/>
<text x="1155.8" y="1020.2" font-size="31" fill="#e6e6e6" text-anchor="middle"  textLength="118.2" lengthAdjust="spacingAndGlyphs">Ducking</text>
<rect x="1233.8" y="940" width="34" height="4.6" fill="#b89068"/><path d="M1260.5 933.5 L1269.5 942.3 L1260.5 951" fill="none" stroke="#b89068" stroke-width="4.6"/>
<path d="M1277 442.5 V431.2 H1461.5 V442.5 H1455 V437 H1283.5 V442.5 Z" fill="#b2dc1e"/>
<text x="1368.6" y="481.9" font-size="31" fill="#f4f4f4" text-anchor="middle"  textLength="81.6" lengthAdjust="spacingAndGlyphs">FB FX</text>
<g stroke="#8c8c8c" stroke-width="2.6"><line x1="1368.4" y1="598.3" x2="1368.40" y2="574.30"/><line x1="1368.40" y1="584.30" x2="1360.21" y2="578.56"/><line x1="1368.40" y1="584.30" x2="1376.59" y2="578.56"/><line x1="1368.4" y1="598.3" x2="1389.18" y2="586.30"/><line x1="1380.52" y1="591.30" x2="1381.40" y2="581.34"/><line x1="1380.52" y1="591.30" x2="1389.59" y2="595.53"/><line x1="1368.4" y1="598.3" x2="1389.18" y2="610.30"/><line x1="1380.52" y1="605.30" x2="1389.59" y2="601.07"/><line x1="1380.52" y1="605.30" x2="1381.40" y2="615.26"/><line x1="1368.4" y1="598.3" x2="1368.40" y2="622.30"/><line x1="1368.40" y1="612.30" x2="1376.59" y2="618.04"/><line x1="1368.40" y1="612.30" x2="1360.21" y2="618.04"/><line x1="1368.4" y1="598.3" x2="1347.62" y2="610.30"/><line x1="1356.28" y1="605.30" x2="1355.40" y2="615.26"/><line x1="1356.28" y1="605.30" x2="1347.21" y2="601.07"/><line x1="1368.4" y1="598.3" x2="1347.62" y2="586.30"/><line x1="1356.28" y1="591.30" x2="1347.21" y2="595.53"/><line x1="1356.28" y1="591.30" x2="1355.40" y2="581.34"/></g>
<path d="M1328.75 778.69 A61.2 61.2 0 1 1 1409.05 778.69" fill="none" stroke="#595959" stroke-width="6.5"/><path d="M1328.75 778.69 A61.2 61.2 0 1 1 1409.05 778.69" fill="none" stroke="#ff8214" stroke-width="6.5"/><circle cx="1368.9" cy="732.5" r="48" fill="#232323"/><circle cx="1368.9" cy="732.5" r="45.5" fill="url(#kg)"/><line x1="1375.97" y1="740.63" x2="1398.85" y2="766.95" stroke="#2a2a2a" stroke-width="8.4" opacity="0.7"/><line x1="1376.36" y1="741.08" x2="1398.45" y2="766.50" stroke="#efefef" stroke-width="7"/>
<text x="1371.3" y="821.2" font-size="31" fill="#e6e6e6" text-anchor="middle"  textLength="87.85" lengthAdjust="spacingAndGlyphs">Width</text>
<path d="M1328.75 975.89 A61.2 61.2 0 1 1 1409.05 975.89" fill="none" stroke="#595959" stroke-width="6.5"/><path d="M1328.75 975.89 A61.2 61.2 0 1 1 1425.23 905.79" fill="none" stroke="#ff8214" stroke-width="6.5"/><circle cx="1368.9" cy="929.7" r="48" fill="#232323"/><circle cx="1368.9" cy="929.7" r="45.5" fill="url(#kg)"/><line x1="1378.82" y1="925.49" x2="1410.92" y2="911.87" stroke="#2a2a2a" stroke-width="8.4" opacity="0.7"/><line x1="1379.37" y1="925.26" x2="1410.36" y2="912.10" stroke="#efefef" stroke-width="7"/>
<text x="1370.1" y="1019" font-size="31" fill="#e6e6e6" text-anchor="middle"  textLength="56" lengthAdjust="spacingAndGlyphs">Mix</text>
<rect x="1494.2" y="730.0" width="26" height="5.6" fill="#8c8c8c"/><rect x="1504.4" y="719.8" width="5.6" height="26" fill="#8c8c8c"/>
<rect x="1494" y="930.8" width="11.7" height="6" fill="#ff6600"/><rect x="1494" y="945" width="11.7" height="15" fill="#ff6600"/><rect x="1494" y="960" width="11.7" height="9" fill="#fedf4a"/><rect x="1494" y="969" width="11.7" height="65" fill="url(#mg)"/><rect x="1508.6" y="939.4" width="11.7" height="6" fill="#ff6600"/><rect x="1508.6" y="960.8" width="11.7" height="9" fill="#fedf4a"/><rect x="1508.6" y="969.8" width="11.7" height="64.20000000000005" fill="url(#mg)"/>
</svg>


</body></html>
